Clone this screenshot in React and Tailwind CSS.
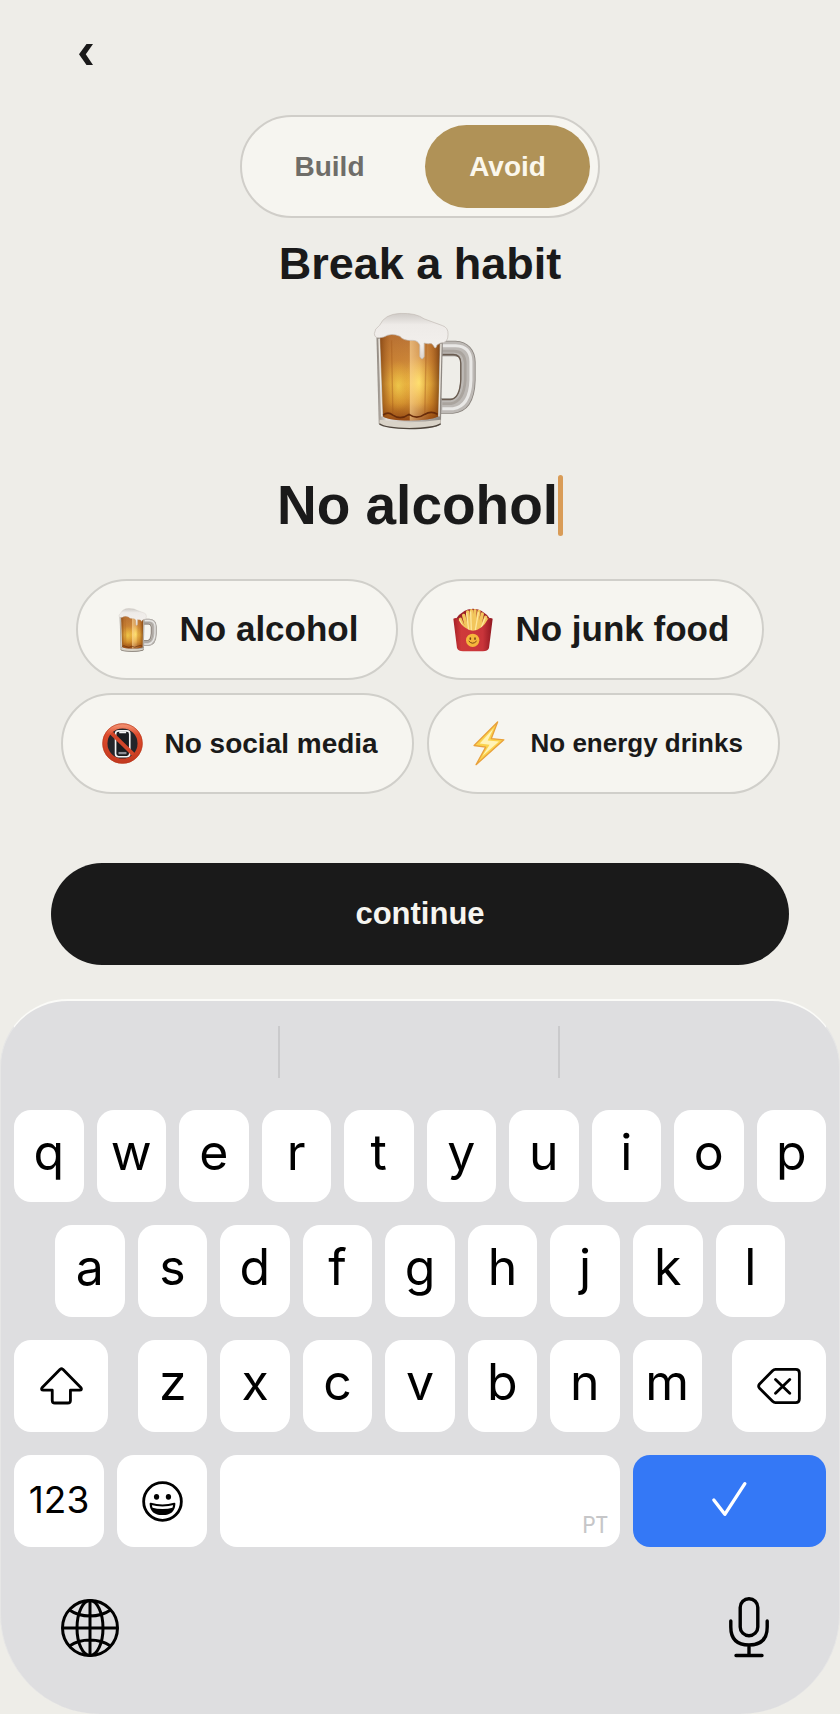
import { useState } from "react";

const SANS = "font-['Liberation_Sans',Arial,sans-serif]";

function BeerIcon({ className, id }) {
  return (
    <svg className={className} viewBox="100 66 312 350" fill="none" aria-hidden="true">
      <defs>
        <linearGradient id={id + "beer"} x1="0" y1="0" x2="0" y2="1">
          <stop offset="0" stopColor="#b9743a" />
          <stop offset="0.3" stopColor="#cf8a3c" />
          <stop offset="0.58" stopColor="#edbb48" />
          <stop offset="0.8" stopColor="#d3902f" />
          <stop offset="1" stopColor="#8f4312" />
        </linearGradient>
        <linearGradient id={id + "side"} x1="0" y1="0" x2="1" y2="0">
          <stop offset="0" stopColor="#7a3c0c" stopOpacity="0.75" />
          <stop offset="0.18" stopColor="#b0621c" stopOpacity="0.25" />
          <stop offset="0.49" stopColor="#b0621c" stopOpacity="0.15" />
          <stop offset="0.5" stopColor="#ffdca0" stopOpacity="0.6" />
          <stop offset="0.66" stopColor="#ffdca0" stopOpacity="0.3" />
          <stop offset="0.85" stopColor="#a8560f" stopOpacity="0.3" />
          <stop offset="1" stopColor="#6e360c" stopOpacity="0.8" />
        </linearGradient>
        <radialGradient id={id + "glow"}>
          <stop offset="0" stopColor="#ffe458" stopOpacity="0.9" />
          <stop offset="1" stopColor="#f5b83a" stopOpacity="0" />
        </radialGradient>
        <linearGradient id={id + "foam"} x1="0" y1="0" x2="0" y2="1">
          <stop offset="0" stopColor="#cfcbc7" />
          <stop offset="0.25" stopColor="#eeebe8" />
          <stop offset="0.7" stopColor="#f2efec" />
          <stop offset="1" stopColor="#dcd3cb" />
        </linearGradient>
        <linearGradient id={id + "glass"} x1="0" y1="0" x2="1" y2="0">
          <stop offset="0" stopColor="#8d857c" />
          <stop offset="0.15" stopColor="#e2ded9" />
          <stop offset="0.6" stopColor="#b9b4af" />
          <stop offset="1" stopColor="#8b857f" />
        </linearGradient>
      </defs>
      <path d="M300 174 H344 Q381 176 382 215 V268 Q380 342 336 345 H300" stroke="#8a847e" strokeWidth="46" />
      <path d="M300 174 H344 Q381 176 382 215 V268 Q380 342 336 345 H300" stroke="#bdb9b5" strokeWidth="41" />
      <path d="M306 166 H346 Q390 168 391 212 V268 Q388 346 338 353 H306" stroke="#e9e8e6" strokeWidth="9" />
      <path d="M306 182 H340 Q372 182 374 216 V268 Q370 330 332 338 H306" stroke="#aaa49e" strokeWidth="8" />
      <path d="M306 192 H338 Q360 192 361 218 V266 Q358 322 330 326 H304" stroke="#6b5d51" strokeWidth="4" />
      <path d="M110 128 H308 L302 396 Q298 413 208 413 Q120 413 117 396 Z" fill={`url(#${id}glass)`} />
      <path d="M121 130 H298 L294 376 Q270 388 208 388 Q148 388 130 376 Z" fill={`url(#${id}beer)`} />
      <ellipse cx="175" cy="285" rx="42" ry="75" fill={`url(#${id}glow)`} />
      <ellipse cx="236" cy="275" rx="46" ry="80" fill={`url(#${id}glow)`} />
      <path d="M121 130 H298 L294 376 Q270 388 208 388 Q148 388 130 376 Z" fill={`url(#${id}side)`} />
      <path d="M155 150 L159 370 M258 160 L254 370" stroke="#a55b1b" strokeOpacity="0.4" strokeWidth="4" />
      <path d="M130 372 Q144 360 159 372 Q182 388 207 370 Q230 386 253 370 Q274 358 292 370" stroke="#682c0a" strokeWidth="5" />
      <path d="M120 386 Q208 400 301 386 L301 398 Q280 411 208 412 Q136 411 119 398 Z" fill="#d9d3c8" />
      <path d="M119 398 Q136 411 208 412 Q280 411 301 398" stroke="#4e453c" strokeWidth="4" />
      <path d="M118 146 L126 376 M302 160 L296 376" stroke="#eee8df" strokeWidth="4" />
      <path d="M104 130 Q104 116 120 105 Q134 72 180 70 Q228 68 252 86 Q284 98 306 106 Q324 112 323 132 Q324 158 300 158 L290 164 Q286 180 280 166 Q274 156 264 160 L252 158 V198 Q246 212 239 198 V164 Q234 150 218 150 Q190 152 180 138 Q154 126 132 140 Q104 148 104 130 Z" fill={`url(#${id}foam)`} stroke="#c2bbb4" strokeWidth="2" />
    </svg>
  );
}

function FriesIcon({ className }) {
  return (
    <svg className={className} viewBox="0 0 120 132" fill="none" aria-hidden="true">
      <defs>
        <linearGradient id="friesBox" x1="0" y1="0" x2="1" y2="0">
          <stop offset="0" stopColor="#a61f27" />
          <stop offset="0.2" stopColor="#cf3a3a" />
          <stop offset="0.75" stopColor="#c9343a" />
          <stop offset="1" stopColor="#8f1720" />
        </linearGradient>
      </defs>
      <path d="M8 34 Q28 2 60 2 Q92 2 112 34 L108 70 H12 Z" fill="#9c2027" />
      <path d="M22 34 L36 70 M32 22 L44 70 M44 12 L50 70 M55 8 L57 70 M66 8 L62 70 M78 10 L68 70 M88 18 L76 70 M98 28 L84 70 M104 36 L88 68 M16 42 L32 66" stroke="#f2c65c" strokeWidth="10" strokeLinecap="round" />
      <path d="M20 36 L34 66 M41 16 L47 66 M53 12 L55 66 M76 14 L67 66 M96 30 L82 66" stroke="#fde69b" strokeWidth="4" strokeLinecap="round" />
      <path d="M1 32 Q10 28 15 33 Q32 66 60 68 Q88 66 105 33 Q111 28 119 32 L108 120 Q104 130 90 130 H30 Q16 130 12 120 Z" fill="url(#friesBox)" />
      <circle cx="59" cy="97" r="20" fill="#f6b73c" />
      <ellipse cx="52" cy="92" rx="2.5" ry="4" fill="#7a4310" />
      <ellipse cx="66" cy="92" rx="2.5" ry="4" fill="#7a4310" />
      <path d="M48 100 Q59 112 70 100" stroke="#7a4310" strokeWidth="3" strokeLinecap="round" />
    </svg>
  );
}

function NoPhoneIcon({ className }) {
  return (
    <svg className={className} viewBox="0 0 124 124" fill="none" aria-hidden="true">
      <defs>
        <linearGradient id="banRing" x1="0" y1="0" x2="0" y2="1">
          <stop offset="0" stopColor="#f08a6a" />
          <stop offset="0.25" stopColor="#dd4a2c" />
          <stop offset="1" stopColor="#c43a20" />
        </linearGradient>
      </defs>
      <circle cx="62" cy="62" r="54" fill="#24252a" />
      <rect x="41" y="24" width="43" height="78" rx="9" fill="#1b1c20" stroke="#f4f4f4" strokeWidth="5" />
      <path d="M52 26 H73 V31 H52 Z" fill="#f4f4f4" />
      <path d="M50 91 H74" stroke="#8d8f96" strokeWidth="7" />
      <path d="M24 26 L100 100" stroke="#d24529" strokeWidth="12" />
      <circle cx="62" cy="62" r="53" stroke="url(#banRing)" strokeWidth="15" />
      <circle cx="62" cy="62" r="60" stroke="#b73519" strokeWidth="2" />
    </svg>
  );
}

function BoltIcon({ className }) {
  return (
    <svg className={className} viewBox="0 0 96 136" fill="none" aria-hidden="true">
      <path d="M74 3 L3 74 L38 79 L9 132 L93 57 L55 53 Z" fill="#fbd34c" stroke="#e9a13b" strokeWidth="4" strokeLinejoin="round" />
      <path d="M62 22 L20 68 L50 72 L28 106 L78 62 L44 59 Z" fill="#fff3b8" />
    </svg>
  );
}

const SUGGESTIONS = [
  { label: "No alcohol", size: "text-[35px]", icon: <BeerIcon id="chip" className="h-11 w-10" /> },
  { label: "No junk food", size: "text-[35px]", icon: <FriesIcon className="h-11 w-10" /> },
  { label: "No social media", size: "text-[28px]", icon: <NoPhoneIcon className="size-[41px]" /> },
  { label: "No energy drinks", size: "text-[26px]", icon: <BoltIcon className="h-[45px] w-8" /> },
];

function Key({ children, className = "flex-1 pb-2", label }) {
  return (
    <button
      type="button"
      aria-label={label}
      className={`flex h-[92px] min-w-0 items-center justify-center rounded-[17px] bg-white text-[50px] leading-none text-black ${className}`}
    >
      {children}
    </button>
  );
}

function Keyboard() {
  return (
    <section
      aria-label="Keyboard"
      className="mt-[34px] flex flex-1 flex-col rounded-t-[68px] rounded-b-[100px] border-x border-t-2 border-x-[#e6e6e6] border-t-[#fbfbf8] bg-[#dedee0] font-[Inter,sans-serif]"
    >
      <div className="mt-[25px] grid h-[52px] grid-cols-3 divide-x-2 divide-[#cacacc]">
        <span />
        <span />
        <span />
      </div>
      <div className="mt-8 flex flex-col gap-[23px] px-[13px]">
        <div className="flex gap-[13px]">
          {[..."qwertyuiop"].map((k) => (
            <Key key={k}>{k}</Key>
          ))}
        </div>
        <div className="flex gap-[13px] px-[41px]">
          {[..."asdfghjkl"].map((k) => (
            <Key key={k}>{k}</Key>
          ))}
        </div>
        <div className="flex gap-[30px]">
          <Key className="w-[94px]" label="Shift">
            <svg className="h-10 w-[45px]" viewBox="118 503 136 121" fill="none" stroke="currentColor" strokeWidth="8.500" strokeLinejoin="round" aria-hidden="true">
              <path d="M182 513 Q186 510 190 513 L245 569 Q249 576 241 576 H213 V607 Q213 615 205 615 H166 Q158 615 158 607 V576 H131 Q123 576 127 569 Z" />
            </svg>
          </Key>
          <div className="flex flex-1 gap-[13px]">
            {[..."zxcvbnm"].map((k) => (
              <Key key={k}>{k}</Key>
            ))}
          </div>
          <Key className="w-[94px]" label="Delete">
            <svg className="h-10 w-[46px]" viewBox="1004 504 139 120" fill="none" stroke="currentColor" strokeWidth="8.500" strokeLinecap="round" strokeLinejoin="round" aria-hidden="true">
              <path d="M1063 514 H1124 Q1135 514 1135 525 V603 Q1135 614 1124 614 H1063 Q1058 614 1054 610 L1014 570 Q1010 565 1014 559 L1054 518 Q1058 514 1063 514 Z M1063 544 L1106 586 M1106 544 L1063 586" />
            </svg>
          </Key>
        </div>
        <div className="flex gap-[13px]">
          <Key className="w-[90px] pb-1">
            <span className="text-[37px]">123</span>
          </Key>
          <Key className="w-[90px]" label="Emoji">
            <svg className="size-[41px]" viewBox="424 840 124 124" fill="none" stroke="currentColor" aria-hidden="true">
              <circle cx="486" cy="902" r="57" strokeWidth="8.500" />
              <ellipse cx="468" cy="888" rx="8" ry="9" fill="currentColor" stroke="none" />
              <ellipse cx="504" cy="888" rx="8" ry="9" fill="currentColor" stroke="none" />
              <path d="M450 909 Q486 919 522 909 Q520 940 486 940 Q452 940 450 909 Z" strokeWidth="6" strokeLinejoin="round" />
              <path d="M453 920 Q486 930 519 920 Q512 942 486 942 Q460 942 453 920 Z" fill="currentColor" stroke="none" />
            </svg>
          </Key>
          <button type="button" aria-label="Space" className="flex h-[92px] flex-1 items-end justify-end rounded-[17px] bg-white px-3 pb-2">
            <span className="font-['Liberation_Sans_Narrow','Roboto_Condensed',Roboto,sans-serif] text-[24px] leading-7 text-[#c6c6c8]">PT</span>
          </button>
          <button type="button" aria-label="Done" className="flex h-[92px] w-[193px] items-center justify-center rounded-[17px] bg-[#3478f6] pb-1 text-white">
            <svg className="h-9 w-[37px]" viewBox="874 843 110 108" fill="none" stroke="currentColor" strokeWidth="10" strokeLinecap="round" strokeLinejoin="round" aria-hidden="true">
              <path d="M882 900 L915 943 L975 851" />
            </svg>
          </button>
        </div>
      </div>
      <div className="mt-[50px] flex items-center justify-between px-[60px] pb-[54px] text-black">
        <button type="button" aria-label="Next keyboard">
          <svg className="size-[58px]" viewBox="0 0 58 58" fill="none" stroke="currentColor" strokeWidth="3" aria-hidden="true">
            <circle cx="29" cy="29" r="27.500" />
            <ellipse cx="29" cy="29" rx="13" ry="27.500" />
            <path d="M1 29 H57 M29 1 V57 M8.500 11 Q17 17 29 17 Q41 17 49.500 11 M8.500 47 Q17 41 29 41 Q41 41 49.500 47" />
          </svg>
        </button>
        <button type="button" aria-label="Dictation" className="mr-[10px]">
          <svg className="h-[61px] w-10" viewBox="0 0 40 61" fill="none" stroke="currentColor" strokeWidth="3.400" strokeLinecap="round" aria-hidden="true">
            <rect x="11.200" y="1.700" width="17.600" height="37" rx="8.800" />
            <path d="M1.800 24 V30 Q1.800 48 20 48 Q38.200 48 38.200 30 V24 M20 48 V58 M7 58.500 H33" />
          </svg>
        </button>
      </div>
    </section>
  );
}

export default function App() {
  const [mode, setMode] = useState("Avoid");
  const [habit, setHabit] = useState("No alcohol");

  return (
    <div className={`flex min-h-screen flex-col bg-[#eeede8] text-[#1a1a1a] ${SANS}`}>
      <header className="flex px-16 pt-8">
        <button type="button" aria-label="Back" className="flex size-11 items-center justify-center">
          <svg className="h-[21px] w-[14px]" viewBox="0 0 14 21" fill="currentColor" aria-hidden="true">
            <path d="M0 10.300 L7.500 0 H14 L6.800 10.300 L14 21 H7.500 Z" />
          </svg>
        </button>
      </header>

      <main className="flex flex-col items-center">
        <div className="mt-[39px] flex h-[103px] gap-4 rounded-full border-2 border-[#d0cec9] bg-[#f6f5f0] p-2">
          {["Build", "Avoid"].map((m) => (
            <button
              key={m}
              type="button"
              aria-pressed={mode === m}
              onClick={() => setMode(m)}
              className={`rounded-full text-[28px] font-bold ${m === "Build" ? "w-[159px]" : "w-[165px]"} ${
                mode === m ? "bg-[#b09257] text-[#fbf7ec]" : "text-[#6f6d69]"
              }`}
            >
              {m}
            </button>
          ))}
        </div>

        <h1 className="mt-[18px] text-[45px] leading-[56px] font-bold">Break a habit</h1>

        <BeerIcon id="hero" className="mt-5 ml-[10px] h-[118px] w-[105px]" />

        <div className="mt-[43px] flex h-16 items-center justify-center">
          <input
            aria-label="Habit name"
            value={habit}
            onChange={(e) => setHabit(e.target.value)}
            className="field-sizing-content h-16 bg-transparent text-center text-[55px] font-bold caret-transparent outline-none"
          />
          <span className="h-[61px] w-[5px] rounded-full bg-[#d99c57]" />
        </div>

        <div className="mt-[42px] flex flex-wrap justify-center gap-[13px] px-12">
          {SUGGESTIONS.map((s) => (
            <button
              key={s.label}
              type="button"
              onClick={() => setHabit(s.label)}
              className="flex h-[101px] max-w-[353px] items-center gap-5 rounded-full border-2 border-[#d0cfca] bg-[#f6f5f0] px-[38px]"
            >
              <span className="flex w-11 shrink-0 justify-center">{s.icon}</span>
              <span className={`font-bold whitespace-nowrap ${s.size}`}>{s.label}</span>
            </button>
          ))}
        </div>

        <div className="mt-[69px] w-full px-[51px]">
          <button type="button" className="h-[102px] w-full rounded-full bg-[#1a1a1a] text-[31px] font-bold text-[#f6f5f0]">
            continue
          </button>
        </div>
      </main>

      <Keyboard />
    </div>
  );
}
